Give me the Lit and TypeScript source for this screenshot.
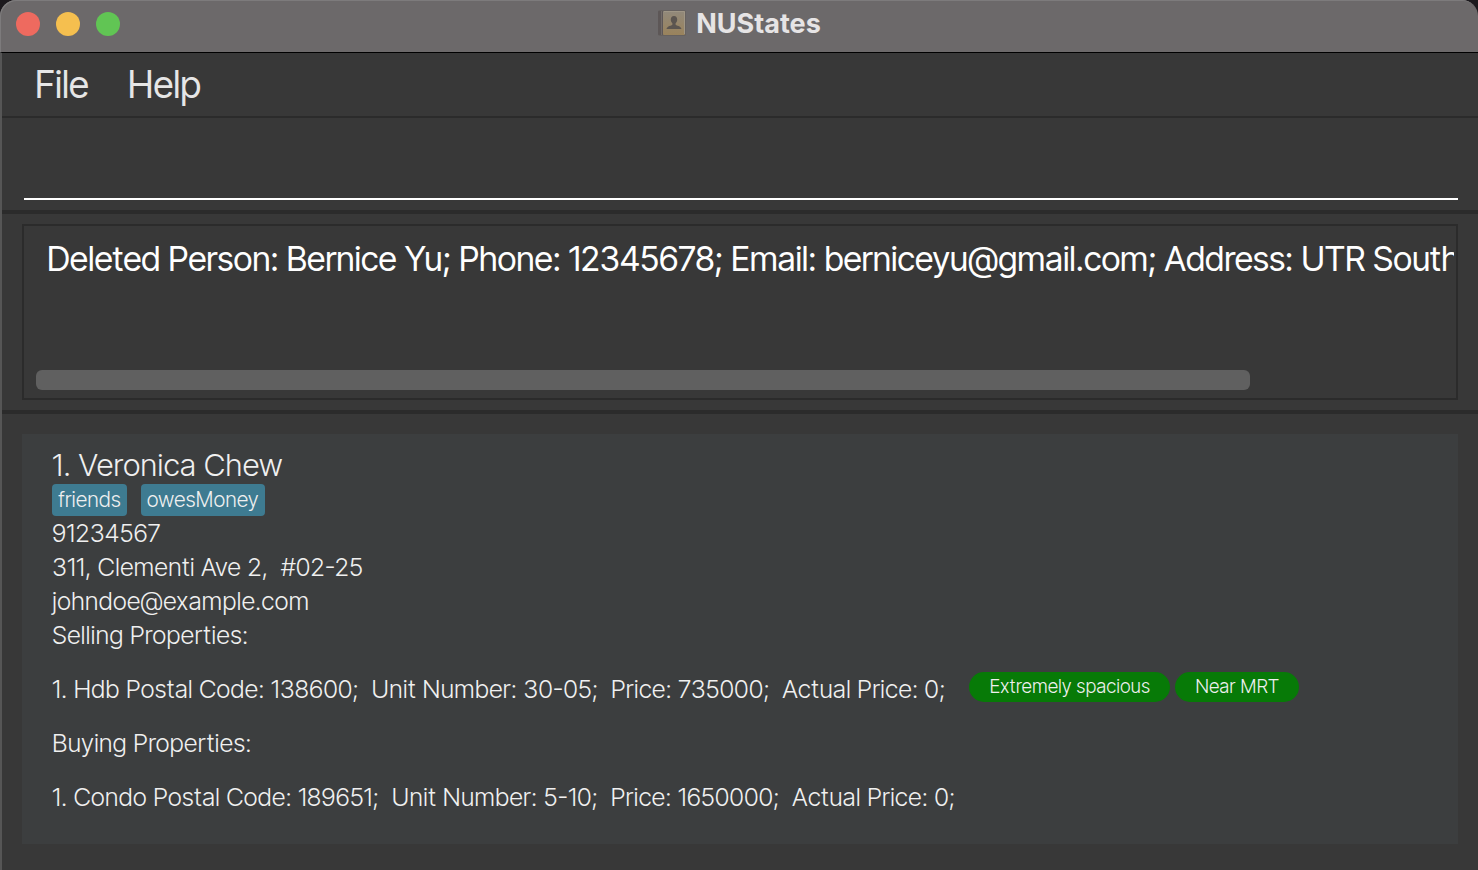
import { LitElement, html, css } from "lit";
import { customElement, property } from "lit/decorators.js";

interface Property {
  kind: string;
  postal: string;
  unit: string;
  price: string;
  actual: string;
  tags: string[];
}

@customElement("title-bar")
class TitleBar extends LitElement {
  static styles = css`
    :host { display: block; }
    .bar {
      display: grid;
      grid-template-columns: 1fr auto 1fr;
      align-items: center;
      height: 52px;
      padding: 0 16px 4px;
      box-sizing: border-box;
      background: #6c696a;
      border-radius: 16px 16px 0 0;
      box-shadow: inset 1px 1px 0 #7d7b7c;
    }
    .lights { display: flex; gap: 16px; }
    .light { width: 24px; height: 24px; padding: 0; border: 0; border-radius: 50%; }
    .close { background: #ee6a5f; }
    .min { background: #f5bf4f; }
    .max { background: #61c554; }
    .title {
      display: flex;
      align-items: center;
      gap: 9px;
      margin: 0;
      color: #e6e4e5;
      font: 700 27px/32px Inter, "Liberation Sans", sans-serif;
    }
    svg { display: block; margin-bottom: 2px; }
  `;
  render() {
    return html`
      <header class="bar">
        <div class="lights">
          <button class="light close" aria-label="Close"></button>
          <button class="light min" aria-label="Minimise"></button>
          <button class="light max" aria-label="Zoom"></button>
        </div>
        <h1 class="title">
          <svg width="30" height="28" viewBox="0 0 30 28" aria-hidden="true">
            <defs>
              <linearGradient id="cover" x1="0" y1="0" x2="0" y2="1">
                <stop offset="0" stop-color="#91897b" />
                <stop offset="1" stop-color="#9a835c" />
              </linearGradient>
            </defs>
            <rect x="1" y="1" width="28" height="26" rx="2" fill="#66615f" />
            <rect x="1" y="2" width="5" height="24" rx="1" fill="#5d5757" />
            <rect x="4" y="2" width="1" height="24" fill="#736c69" />
            <rect x="6" y="2" width="22" height="24" rx="1" fill="url(#cover)" />
            <path d="M7 2.500H27.500V25" fill="none" stroke="#9f9685" stroke-width="1" />
            <path
              d="M17 7c-2.200 0-3.200 1.600-3.200 3.600 0 1.600.7 3 1.600 3.700v1.500c-.8 1-5.300 1.100-5.900 4.200h15c-.6-3.100-5.100-3.200-5.900-4.200v-1.500c.9-.7 1.600-2.100 1.600-3.700C20.200 8.600 19.200 7 17 7z"
              fill="#5b5550"
            />
          </svg>
          NUStates
        </h1>
      </header>
    `;
  }
}

@customElement("property-row")
class PropertyRow extends LitElement {
  @property({ type: Number }) index = 1;
  @property({ attribute: false }) item!: Property;
  static styles = css`
    :host { display: block; }
    .row { display: flex; align-items: center; gap: 24px; white-space: pre; }
    .tags { display: flex; gap: 5px; margin-bottom: 4px; }
    .tag {
      padding: 0 20px;
      border-radius: 15px;
      background: #077a07;
      font-size: 19px;
      line-height: 30px;
    }
  `;
  render() {
    const p = this.item;
    const text = `${this.index}. ${p.kind} Postal Code: ${p.postal};  Unit Number: ${p.unit};  Price: ${p.price};  Actual Price: ${p.actual};`;
    return html`<div class="row"><span>${text}</span>${p.tags.length
      ? html`<div class="tags">${p.tags.map((t) => html`<span class="tag">${t}</span>`)}</div>`
      : null}</div>`;
  }
}

@customElement("person-card")
class PersonCard extends LitElement {
  static styles = css`
    :host { display: block; }
    .card {
      padding: 12px 30px 30px;
      background: #3c3e3f;
      color: #f0f0f0;
      font: 300 25px/34px "Inter Tight", Inter, "Liberation Sans", sans-serif;
    }
    .name { margin: 0; font-size: 31px; font-weight: 300; line-height: 38px; }
    .tags { display: flex; gap: 14px; }
    .tag {
      padding: 0 6px;
      border-radius: 4px;
      background: #3e7b91;
      font-size: 21px;
      line-height: 32px;
    }
    p, h3 { margin: 0; font-size: 25px; font-weight: 300; white-space: pre; }
    .group { display: flex; flex-direction: column; gap: 20px; }
    .group + .group { margin-top: 20px; }
  `;
  selling: Property[] = [
    { kind: "Hdb", postal: "138600", unit: "30-05", price: "735000", actual: "0", tags: ["Extremely spacious", "Near MRT"] },
  ];
  buying: Property[] = [
    { kind: "Condo", postal: "189651", unit: "5-10", price: "1650000", actual: "0", tags: [] },
  ];
  group(title: string, items: Property[]) {
    return html`<section class="group">
      <h3>${title}</h3>
      ${items.map((p, i) => html`<property-row .index=${i + 1} .item=${p}></property-row>`)}
    </section>`;
  }
  render() {
    return html`
      <article class="card">
        <h2 class="name">1. Veronica Chew</h2>
        <div class="tags"><span class="tag">friends</span><span class="tag">owesMoney</span></div>
        <p>91234567</p>
        <p>311, Clementi Ave 2,  #02-25</p>
        <p>johndoe@example.com</p>
        ${this.group("Selling Properties:", this.selling)}
        ${this.group("Buying Properties:", this.buying)}
      </article>
    `;
  }
}

@customElement("app-root")
class AppRoot extends LitElement {
  static styles = css`
    :host {
      display: block;
      background: #1c191d;
    }
    .window {
      display: flex;
      flex-direction: column;
      min-height: 100vh;
    }
    .body {
      flex: 1;
      background: #383838;
      border-top: 1px solid #000;
      border-left: 2px solid #565656;
    }
    .menu {
      display: flex;
      gap: 39px;
      height: 63px;
      padding: 0 33px;
      border-bottom: 2px solid #2b2b2b;
    }
    .item {
      padding: 0;
      border: 0;
      background: none;
      color: #e6e6e6;
      font: 400 37px/63px "Inter Tight", Inter, "Liberation Sans", sans-serif;
    }
    .command { padding: 0 20px 10px 22px; border-bottom: 4px solid #2b2b2b; }
    .input {
      display: block;
      width: 100%;
      height: 82px;
      box-sizing: border-box;
      padding: 0 8px;
      border: 0;
      border-bottom: 2px solid #fff;
      outline: 0;
      background: none;
      color: #fff;
      font: 400 34px/40px "Inter Tight", Inter, "Liberation Sans", sans-serif;
    }
    .result { padding: 10px 20px; border-bottom: 4px solid #2b2b2b; }
    .frame {
      display: flex;
      flex-direction: column;
      justify-content: space-between;
      height: 176px;
      box-sizing: border-box;
      padding: 12px 2px 8px 12px;
      border: 2px solid #2b2b2b;
    }
    .message {
      display: block;
      height: 48px;
      padding: 0 0 0 11px;
      margin: 0;
      border: 0;
      outline: 0;
      resize: none;
      overflow: hidden;
      white-space: pre;
      background: none;
      color: #fff;
      font: 400 34px/42px "Inter Tight", Inter, "Liberation Sans", sans-serif;
    }
    .track { margin-right: 10px; }
    .thumb { height: 20px; border-radius: 6px; background: #606060; }
    .list { padding: 20px 20px 26px; }
  `;
  thumb = 86.2;
  render() {
    return html`
      <div class="window">
        <title-bar></title-bar>
        <main class="body">
          <nav class="menu">
            <button class="item">File</button>
            <button class="item">Help</button>
          </nav>
          <div class="command"><input class="input" type="text" aria-label="Command" /></div>
          <div class="result">
            <div class="frame">
              <textarea class="message" readonly aria-label="Result" .value=${"Deleted Person: Bernice Yu; Phone: 12345678; Email: berniceyu@gmail.com; Address: UTR South"}></textarea>
              <div class="track"><div class="thumb" style="width:${this.thumb}%"></div></div>
            </div>
          </div>
          <div class="list"><person-card></person-card></div>
        </main>
      </div>
    `;
  }
}
